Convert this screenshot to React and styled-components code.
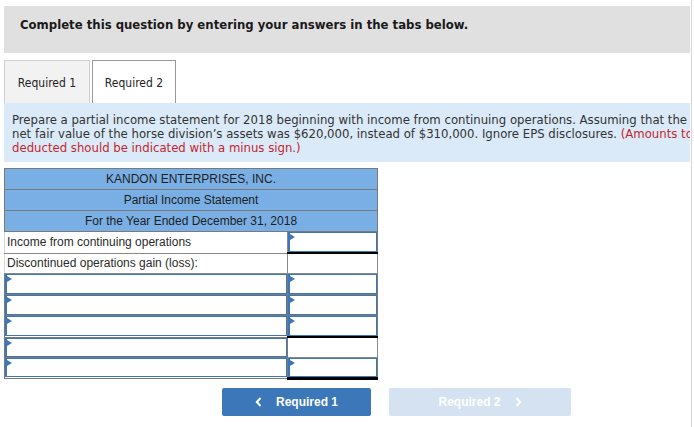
import React from "react";
import styled, { createGlobalStyle } from "styled-components";

const Global = createGlobalStyle`
  html, body { margin: 0; padding: 0; background: #fff; }
  body { width: 694px; height: 427px; overflow: hidden; }
`;

const Page = styled.div`
  width: 692px;
  height: 427px;
  border-right: 1px solid #d6d6d6;
  overflow: hidden;
  box-sizing: border-box;
  padding: 6px 1px 0 4px;
  font-family: "DejaVu Sans Condensed", "DejaVu Sans", sans-serif;
`;

const Banner = styled.div`
  height: 47px;
  box-sizing: border-box;
  background: #e0e0e0;
  padding: 12px 16px 0;
  font-size: 13px;
  line-height: 14px;
  font-weight: bold;
  color: #1a1a1a;
  white-space: nowrap;
`;

const Tabs = styled.div`
  display: flex;
  gap: 2px;
  margin-top: 7px;
  height: 43px;
`;

const Tab = styled.div`
  box-sizing: border-box;
  width: ${(p) => p.$w}px;
  height: 43px;
  display: flex;
  align-items: center;
  justify-content: center;
  font-size: 12px;
  color: #222;
  background: ${(p) => (p.$active ? "#fff" : "#f2f2f2")};
  border: 1px solid ${(p) => (p.$active ? "#9a9a9a" : "#cfcfcf")};
  border-bottom: none;
  padding-top: 1px;
`;

const Info = styled.div`
  background: #dbeaf8;
  padding: 10px 0 7px 8px;
  font-size: 13px;
  line-height: 14px;
  color: #333;
  white-space: nowrap;
  overflow: hidden;
`;

const Red = styled.span`
  color: #c4262e;
`;

const Table = styled.table`
  margin-top: 6px;
  border-collapse: collapse;
  width: 373px;
  table-layout: fixed;
  font-family: "Liberation Sans", Arial, sans-serif;
  font-size: 12px;
  color: #2a2a2a;
`;

const HeadCell = styled.td`
  height: 20px;
  padding: 0;
  background: #7aafe6;
  border: 1px solid #7a7a7a;
  text-align: center;
  color: #1e1e1e;
  line-height: 18px;
`;

const LabelCell = styled.td`
  height: ${(p) => p.$h || 20}px;
  padding: 0 0 0 2px;
  border: 1px solid #8a8a8a;
  border-left: 1px solid #d8d8d8;
  line-height: 18px;
  white-space: nowrap;
  overflow: hidden;
`;

const InputCell = styled.td`
  height: ${(p) => p.$h}px;
  padding: 0;
  border: 1px solid #7a7a7a;
  border-bottom: ${(p) => (p.$total ? "3px solid #000" : "1px solid #7a7a7a")};
  vertical-align: top;
`;

const PlainCell = styled.td`
  height: ${(p) => p.$h || 19}px;
  padding: 0;
  border: 1px solid #8a8a8a;
  border-top: 2px solid #000;
  background: #fff;
`;

const InputBox = styled.div`
  position: relative;
  box-sizing: border-box;
  height: ${(p) => p.$h}px;
  border: 1px solid #3f76b8;
  border-left-width: 2px;
  background: #fff;
  &::before {
    content: "";
    position: absolute;
    left: 0;
    top: 1px;
    border-top: 3px solid transparent;
    border-bottom: 3px solid transparent;
    border-left: 5px solid #3f76b8;
  }
`;

const Buttons = styled.div`
  display: flex;
  gap: 18px;
  margin: 8px 0 0 218px;
`;

const NavButton = styled.div`
  box-sizing: border-box;
  width: ${(p) => p.$w}px;
  height: 28px;
  border-radius: 2px;
  background: ${(p) => (p.$disabled ? "#d5e2f1" : "#3b77b9")};
  color: #fff;
  display: flex;
  align-items: center;
  justify-content: center;
  gap: 14px;
  font-family: "Liberation Sans", Arial, sans-serif;
  font-weight: bold;
  font-size: 12px;
`;

const Chevron = ({ dir }) => (
  <svg width="7" height="10" viewBox="0 0 7 10">
    <path
      d={dir === "left" ? "M5.5 1 L1.8 5 L5.5 9" : "M1.5 1 L5.2 5 L1.5 9"}
      fill="none"
      stroke="#fff"
      strokeWidth="2"
    />
  </svg>
);

const Input = ({ total, h = 20 }) => (
  <InputCell $total={total} $h={h}>
    <InputBox $h={h} />
  </InputCell>
);

export default function App() {
  return (
    <>
      <Global />
      <Page>
        <Banner>Complete this question by entering your answers in the tabs below.</Banner>
        <Tabs>
          <Tab $w={86}>Required 1</Tab>
          <Tab $w={84} $active>Required 2</Tab>
        </Tabs>
        <Info>
          Prepare a partial income statement for 2018 beginning with income from continuing operations. Assuming that the
          <br />
          net fair value of the horse division’s assets was $620,000, instead of $310,000. Ignore EPS disclosures.{" "}
          <Red>(Amounts to be</Red>
          <br />
          <Red>deducted should be indicated with a minus sign.)</Red>
        </Info>
        <Table>
          <colgroup>
            <col style={{ width: "283px" }} />
            <col style={{ width: "90px" }} />
          </colgroup>
          <tbody>
            <tr>
              <HeadCell colSpan={2}>KANDON ENTERPRISES, INC.</HeadCell>
            </tr>
            <tr>
              <HeadCell colSpan={2}>Partial Income Statement</HeadCell>
            </tr>
            <tr>
              <HeadCell colSpan={2}>For the Year Ended December 31, 2018</HeadCell>
            </tr>
            <tr>
              <LabelCell>Income from continuing operations</LabelCell>
              <Input />
            </tr>
            <tr>
              <LabelCell $h={19}>Discontinued operations gain (loss):</LabelCell>
              <PlainCell />
            </tr>
            <tr>
              <Input />
              <Input />
            </tr>
            <tr>
              <Input />
              <Input />
            </tr>
            <tr>
              <Input />
              <Input />
            </tr>
            <tr>
              <Input h={19} />
              <PlainCell />
            </tr>
            <tr>
              <Input h={19} />
              <Input total h={19} />
            </tr>
          </tbody>
        </Table>
        <Buttons>
          <NavButton $w={149}>
            <Chevron dir="left" />
            Required 1
          </NavButton>
          <NavButton $w={182} $disabled>
            Required 2
            <Chevron dir="right" />
          </NavButton>
        </Buttons>
      </Page>
    </>
  );
}
